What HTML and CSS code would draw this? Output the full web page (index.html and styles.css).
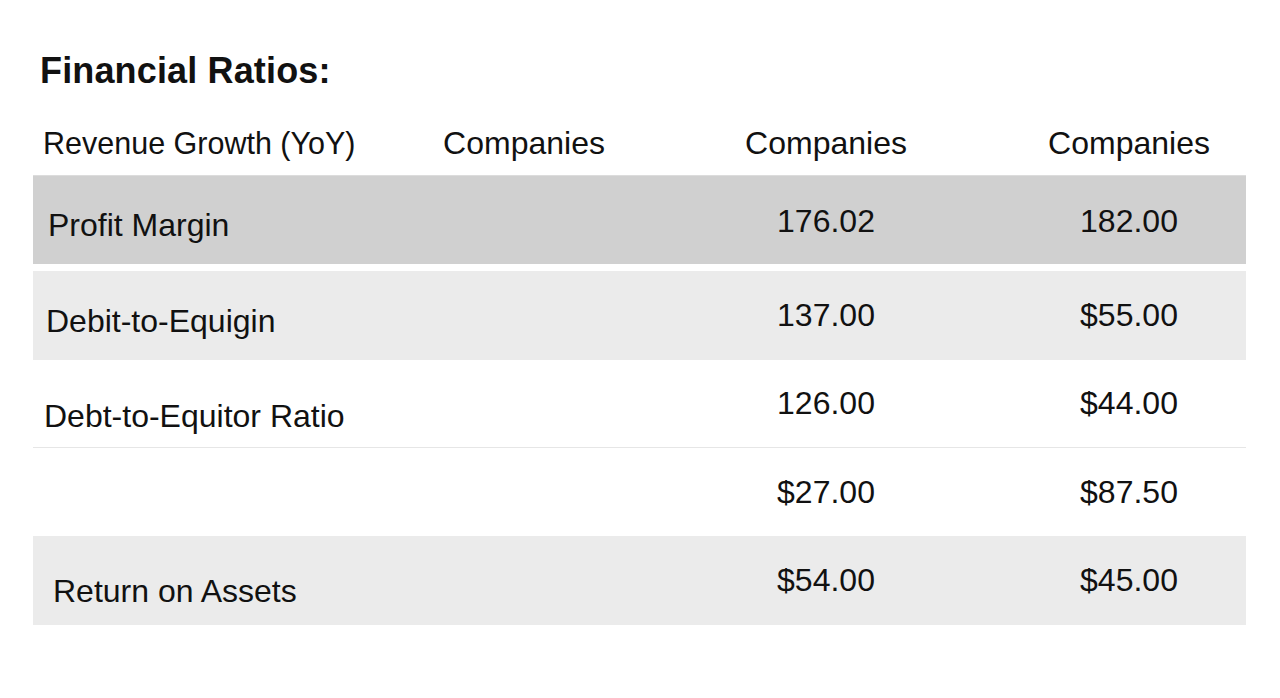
FILE: index.html
```html
<!DOCTYPE html>
<html lang="en">
<head>
<meta charset="utf-8">
<title>Financial Ratios</title>
<link rel="stylesheet" href="styles.css">
</head>
<body>
<main class="page">
  <h1 class="title">Financial Ratios:</h1>
  <div class="table">
    <div class="row row-head">
      <div class="cell label label-head">Revenue Growth (YoY)</div>
      <div class="cell col2">Companies</div>
      <div class="cell num">Companies</div>
      <div class="cell num last">Companies</div>
    </div>
    <div class="row row-dark">
      <div class="cell label l1">Profit Margin</div>
      <div class="cell col2"></div>
      <div class="cell num">176.02</div>
      <div class="cell num last">182.00</div>
    </div>
    <div class="row row-light">
      <div class="cell label l2">Debit-to-Equigin</div>
      <div class="cell col2"></div>
      <div class="cell num">137.00</div>
      <div class="cell num last">$55.00</div>
    </div>
    <div class="row row-white row-line">
      <div class="cell label l3">Debt-to-Equitor Ratio</div>
      <div class="cell col2"></div>
      <div class="cell num">126.00</div>
      <div class="cell num last">$44.00</div>
    </div>
    <div class="row row-white">
      <div class="cell label"></div>
      <div class="cell col2"></div>
      <div class="cell num">$27.00</div>
      <div class="cell num last">$87.50</div>
    </div>
    <div class="row row-light">
      <div class="cell label l5">Return on Assets</div>
      <div class="cell col2"></div>
      <div class="cell num">$54.00</div>
      <div class="cell num last">$45.00</div>
    </div>
  </div>
</main>
</body>
</html>
```

FILE: styles.css
```css
* { box-sizing: border-box; }

html, body {
  margin: 0;
  padding: 0;
  background: #ffffff;
}

body {
  font-family: "Liberation Sans", Arial, sans-serif;
  color: #111111;
}

.page {
  padding: 49px 34px 0 33px;
  width: 1280px;
}

.title {
  margin: 0 0 0 7px;
  font-size: 36px;
  font-weight: 700;
  line-height: 43px;
  letter-spacing: 0.15px;
  color: #111111;
}

.table {
  display: flex;
  flex-direction: column;
  width: 1213px;
}

.row {
  display: grid;
  grid-template-columns: 340px 302px 302px 269px;
  align-items: center;
  height: 89px;
}

.row-head {
  height: 83px;
  padding-top: 19px;
  background: #ffffff;
}

.row-dark {
  background: #d0d0d0;
  border-top: 1px solid #dcdcdc;
  margin-bottom: 7px;
  padding-top: 3px;
}

.row-light {
  background: #ebebeb;
}

.row-white {
  background: #ffffff;
  height: 88px;
}

.row-line {
  border-bottom: 1px solid #e6e6e6;
}

.cell {
  white-space: nowrap;
}

.label {
  padding-left: 13px;
  font-size: 32px;
}

.label-head {
  padding-left: 10px;
  font-size: 30.5px;
}

.l1 { padding-left: 15px; padding-top: 8px; }
.l2 { padding-left: 13px; padding-top: 11px; }
.l3 { padding-left: 11px; padding-top: 25px; }
.l5 { padding-left: 20px; padding-top: 21px; }

.col2 {
  font-size: 32px;
  text-align: center;
}

.num {
  font-size: 32px;
  text-align: center;
}

.last {
  padding-left: 35px;
}
```
